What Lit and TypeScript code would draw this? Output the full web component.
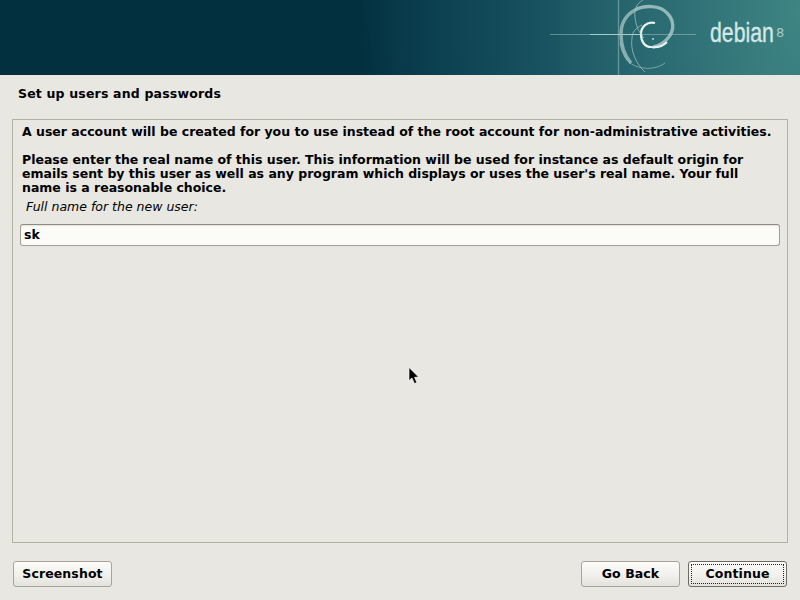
import { LitElement, html, css } from "lit";
import { customElement } from "lit/decorators.js";

@customElement("app-root")
export class AppRoot extends LitElement {
  static styles = css`
    :host {
      display: flex;
      flex-direction: column;
      position: relative;
      width: 800px;
      height: 600px;
      overflow: hidden;
      background: #e8e7e1;
      color: #000;
      font-family: "DejaVu Sans", sans-serif;
      font-size: 12.5px;
      line-height: 14px;
      font-weight: bold;
    }
    .banner {
      position: relative;
      flex: none;
      height: 75px;
      background: radial-gradient(ellipse 440px 900px at 800px 10px, #3f8584 0%, #23616b 45%, #154d5c 68%, #0a3e4e 86%, #05364a00 100%);
      background-color: #02303f;
      overflow: hidden;
    }
    .art {
      position: absolute;
      left: 0;
      top: 0;
    }
    .word {
      position: absolute;
      left: 710px;
      top: 17px;
      color: #d6e8e4;
      font-family: "Liberation Sans", sans-serif;
      font-weight: normal;
      font-size: 28px;
      line-height: 32px;
      -webkit-text-stroke: 0.35px #d6e8e4;
      transform: scaleX(0.76);
      transform-origin: left top;
    }
    .ver {
      position: absolute;
      left: 776px;
      top: 26px;
      color: #a9cbc8;
      font-family: "DejaVu Sans", sans-serif;
      font-weight: normal;
      font-size: 13px;
      line-height: 14px;
    }
    .title {
      flex: none;
      height: 44px;
      padding: 12px 0 0 18px;
      box-sizing: border-box;
      letter-spacing: 0.18px;
    }
    .frame {
      flex: none;
      height: 424px;
      margin: 0 12px;
      box-sizing: border-box;
      border: 1px solid #b5b0a5;
      padding: 5px 7px 0 9px;
      display: flex;
      flex-direction: column;
    }
    p {
      margin: 0;
      letter-spacing: -0.005px;
      white-space: nowrap;
    }
    .gap {
      margin-top: 14px;
    }
    .label {
      margin: 5px 0 0 4px;
      font-weight: normal;
      font-style: italic;
    }
    .entry {
      margin: 10px 0 0 -2px;
      height: 22px;
      box-sizing: border-box;
      border: 1px solid #a49f94;
      border-top-color: #8f8b80;
      border-radius: 3px;
      background: #fbfcf8;
      padding: 3px 0 0 3px;
      box-shadow: inset 0 1px 1px #e4e3dc;
    }
    .actions {
      flex: 1;
      display: flex;
      align-items: flex-start;
      padding: 18px 13px 0;
    }
    .spacer {
      flex: 1;
    }
    .btn {
      height: 26px;
      box-sizing: border-box;
      border: 1px solid #a9a498;
      border-radius: 3px;
      background: linear-gradient(180deg, #fbfbf9 0%, #f1f0ec 55%, #e3e2dc 100%);
      display: flex;
      align-items: center;
      justify-content: center;
      letter-spacing: 0.1px;
      padding-bottom: 1px;
    }
    .shot { width: 99px; }
    .back { width: 99px; margin-right: 8px; }
    .go {
      width: 99px;
      border-color: #6f6b62;
      position: relative;
    }
    .go::after {
      content: "";
      position: absolute;
      inset: 2px;
      border: 1px dotted #222;
    }
    .cursor {
      position: absolute;
      left: 408px;
      top: 367px;
    }
  `;

  render() {
    return html`
      <div class="banner">
        <svg class="art" width="800" height="75" viewBox="0 0 800 75" fill="none">
          <path d="M362 0 L376 75 L560 75 L560 0 Z" fill="#0e4454" opacity="0.12" />
          <path d="M618.5 0 V75" stroke="#8fb5b3" stroke-opacity="0.6" stroke-width="1.4" />
          <path d="M550 34.5 H696" stroke="#b8d3d0" stroke-opacity="0.45" stroke-width="1" />
          <path d="M590 34.5 H640" stroke="#dcebe8" stroke-opacity="0.6" stroke-width="1" />
          <path d="M635 10 C644 5 660 5 667 13 C674 20 675 30 668 38 C664 43 658 46 653 47" stroke="#a7c6c3" stroke-opacity="0.85" stroke-width="3.4" />
          <path d="M635 10 C626 15 621 24 621 34 C621 46 624 55 631 63" stroke="#9fc1be" stroke-opacity="0.8" stroke-width="3.4" />
          <path d="M655 23 C647 21 641 27 641 34 C641 42 645 47 651 47 C658 48 663 46 667 42" stroke="#e6f2ef" stroke-width="2.2" />
          <path d="M643 0 C636 4 634 10 635 17 C636 27 640 34 644 38" stroke="#a9c9c6" stroke-opacity="0.7" stroke-width="1" />
          <path d="M642 25 C636 28 632 32 632 38 C630 50 636 64 645 72" stroke="#a9c9c6" stroke-opacity="0.7" stroke-width="1" />
          <path d="M620 43 C622 54 626 60 630 63 C638 69 654 71 665 63" stroke="#a9c9c6" stroke-opacity="0.6" stroke-width="1" />
          <circle cx="653" cy="39" r="0.9" fill="#cfe3df" />
        </svg>
        <span class="word">debian</span><span class="ver">8</span>
      </div>
      <div class="title">Set up users and passwords</div>
      <div class="frame">
        <p>A user account will be created for you to use instead of the root account for non-administrative activities.</p>
        <p class="gap">Please enter the real name of this user. This information will be used for instance as default origin for<br />emails sent by this user as well as any program which displays or uses the user's real name. Your full<br />name is a reasonable choice.</p>
        <div class="label">Full name for the new user:</div>
        <div class="entry">sk</div>
      </div>
      <div class="actions">
        <div class="btn shot">Screenshot</div>
        <div class="spacer"></div>
        <div class="btn back">Go Back</div>
        <div class="btn go">Continue</div>
      </div>
      <svg class="cursor" width="13" height="18" viewBox="0 0 13 18">
        <path d="M1 0.5 V13.5 L4 11 L6.5 16.5 L8.8 15.5 L6.5 10.3 L10.5 10 Z" fill="#000" stroke="#fff" stroke-width="0.6" />
      </svg>
    `;
  }
}
